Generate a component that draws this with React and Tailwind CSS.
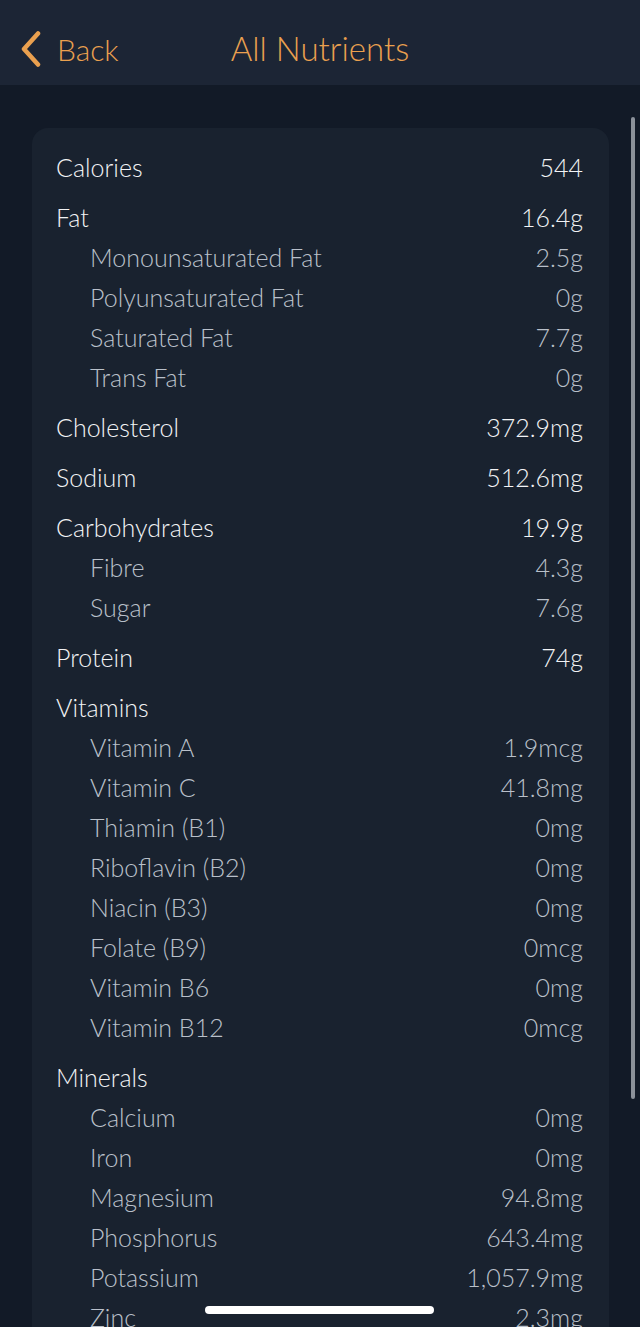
import React from 'react';

const nutrients = [
  { name: 'Calories', value: '544' },
  { name: 'Fat', value: '16.4g' },
  { name: 'Monounsaturated Fat', value: '2.5g', sub: true },
  { name: 'Polyunsaturated Fat', value: '0g', sub: true },
  { name: 'Saturated Fat', value: '7.7g', sub: true },
  { name: 'Trans Fat', value: '0g', sub: true },
  { name: 'Cholesterol', value: '372.9mg' },
  { name: 'Sodium', value: '512.6mg' },
  { name: 'Carbohydrates', value: '19.9g' },
  { name: 'Fibre', value: '4.3g', sub: true },
  { name: 'Sugar', value: '7.6g', sub: true },
  { name: 'Protein', value: '74g' },
  { name: 'Vitamins', value: '' },
  { name: 'Vitamin A', value: '1.9mcg', sub: true },
  { name: 'Vitamin C', value: '41.8mg', sub: true },
  { name: 'Thiamin (B1)', value: '0mg', sub: true },
  { name: 'Riboflavin (B2)', value: '0mg', sub: true },
  { name: 'Niacin (B3)', value: '0mg', sub: true },
  { name: 'Folate (B9)', value: '0mcg', sub: true },
  { name: 'Vitamin B6', value: '0mg', sub: true },
  { name: 'Vitamin B12', value: '0mcg', sub: true },
  { name: 'Minerals', value: '' },
  { name: 'Calcium', value: '0mg', sub: true },
  { name: 'Iron', value: '0mg', sub: true },
  { name: 'Magnesium', value: '94.8mg', sub: true },
  { name: 'Phosphorus', value: '643.4mg', sub: true },
  { name: 'Potassium', value: '1,057.9mg', sub: true },
  { name: 'Zinc', value: '2.3mg', sub: true },
];

const App = () => {
  return (
    <div className="relative h-[1327px] w-[640px] overflow-hidden bg-[#121a27] font-['Lato',sans-serif] font-light">
      {/* Header */}
      <header className="relative flex h-[85px] items-center bg-[#1c2535] pt-[12px]">
        <div className="flex items-center pl-[20px] text-[#eaa04f]">
          <svg width="22" height="36" viewBox="0 0 22 36" fill="none">
            <path d="M18 2.5 L4 18 L18 33.5" stroke="#eaa04f" strokeWidth="4.5" strokeLinecap="round" strokeLinejoin="round" />
          </svg>
          <span className="ml-[15px] text-[30px] leading-none">Back</span>
        </div>
        <h1 className="absolute left-0 right-0 text-center text-[33px] leading-none text-[#eaa04f]">
          All Nutrients
        </h1>
      </header>

      {/* Content */}
      <div className="px-[32px] pt-[43px] pr-[31px]">
        <div className="rounded-[16px] bg-[#19222f] pt-[10px] pb-[20px] pl-[24px] pr-[26px]">
          {nutrients.map((n) => (
            <div
              key={n.name}
              className={`flex h-[40px] items-center justify-between text-[25px] ${
                n.sub ? 'pl-[34px] text-[#b9c0ca]' : 'mt-[10px] text-[#f2f3f5]'
              }`}
            >
              <span>{n.name}</span>
              <span>{n.value}</span>
            </div>
          ))}
        </div>
      </div>

      {/* Scroll indicator */}
      <div className="absolute left-[631px] top-[117px] h-[982px] w-[4px] rounded-full bg-[#8b919a]" />

      {/* Home indicator */}
      <div className="absolute left-[205px] top-[1306px] h-[8px] w-[229px] rounded-full bg-white" />
    </div>
  );
};

export default App;
